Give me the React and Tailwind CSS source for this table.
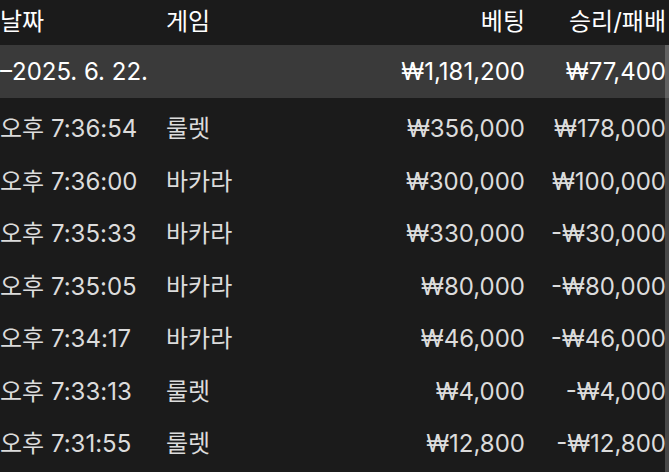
import React from 'react';

const rows = [
  { time: '오후 7:36:54', game: '룰렛', bet: '₩356,000', result: '₩178,000' },
  { time: '오후 7:36:00', game: '바카라', bet: '₩300,000', result: '₩100,000' },
  { time: '오후 7:35:33', game: '바카라', bet: '₩330,000', result: '-₩30,000' },
  { time: '오후 7:35:05', game: '바카라', bet: '₩80,000', result: '-₩80,000' },
  { time: '오후 7:34:17', game: '바카라', bet: '₩46,000', result: '-₩46,000' },
  { time: '오후 7:33:13', game: '룰렛', bet: '₩4,000', result: '-₩4,000' },
  { time: '오후 7:31:55', game: '룰렛', bet: '₩12,800', result: '-₩12,800' },
];

function App() {
  return (
    <div
      className="relative w-[669px] h-[472px] overflow-hidden bg-[#1b1b1b] text-[24px] leading-none"
      style={{ fontFamily: '"Inter", "Noto Sans CJK KR", sans-serif' }}
    >
      {/* Header */}
      <div className="flex items-center h-[45px] pb-[2px] text-white">
        <div className="w-[166px]">날짜</div>
        <div className="flex-1">게임</div>
        <div className="w-[200px] text-right">베팅</div>
        <div className="w-[144px] text-right pr-[3px]">승리/패배</div>
      </div>

      {/* Day summary */}
      <div className="flex items-center h-[53px] bg-[#3a3a3a] text-white">
        <div className="w-[166px]">–2025. 6. 22.</div>
        <div className="flex-1"></div>
        <div className="w-[200px] text-right">₩1,181,200</div>
        <div className="w-[144px] text-right pr-[3px]">₩77,400</div>
      </div>

      {/* Rows */}
      <div className="pt-[5px]">
        {rows.map((r) => (
          <div key={r.time} className="flex items-center h-[52.5px] text-[#dcdcdc]">
            <div className="w-[166px] whitespace-nowrap">{r.time}</div>
            <div className="flex-1">{r.game}</div>
            <div className="w-[200px] text-right">{r.bet}</div>
            <div className="w-[144px] text-right pr-[3px]">{r.result}</div>
          </div>
        ))}
      </div>

      {/* scrollbar */}
      <div className="absolute right-0 top-[45px] bottom-0 w-[4px] bg-white/20"></div>
    </div>
  );
}

export default App;
